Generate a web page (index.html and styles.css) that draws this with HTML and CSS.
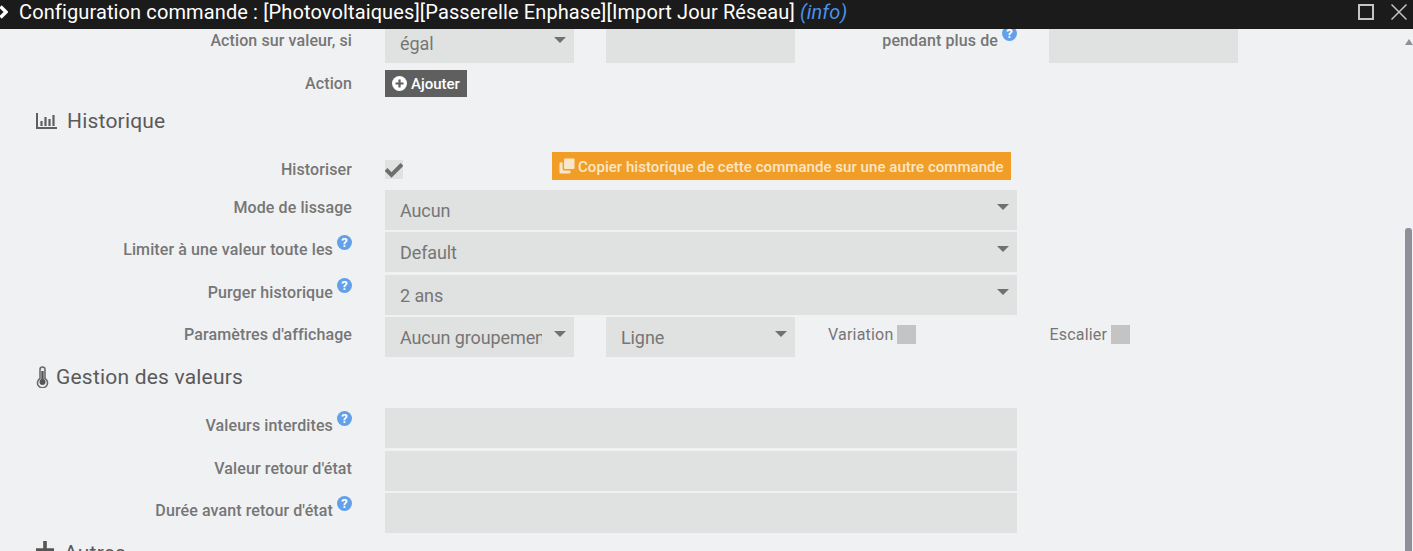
FILE: index.html
```html
<!DOCTYPE html>
<html>
<head>
<title>Configuration commande</title>
<meta name="viewport" content="width=device-width, initial-scale=1.0">
<link rel="stylesheet" href="styles.css">
</head>
<body>

<div class="modal">
  <div class="modal-title">
    <svg class="title-arrow" width="9" height="14" viewBox="0 0 9 14"><polyline points="1.5,1.5 7,7 1.5,12.5" fill="none" stroke="#fff" stroke-width="3.4"/></svg>
    <span class="title-text">Configuration commande : [Photovoltaiques][Passerelle Enphase][Import Jour Réseau] <i class="title-type">(info)</i></span>
    <svg class="title-btn" width="16" height="16" viewBox="0 0 16 16"><rect x="1" y="1" width="14" height="14" fill="none" stroke="#c4c4c4" stroke-width="2"/></svg>
    <svg class="title-btn" width="16" height="16" viewBox="0 0 16 16"><path d="M0.5 0.5 L15.5 15.5 M15.5 0.5 L0.5 15.5" fill="none" stroke="#c4c4c4" stroke-width="1.5"/></svg>
  </div>

  <div class="modal-body">
    <div class="row row-first">
      <label class="field-label">Action sur valeur, si</label>
      <div class="select-wrap small"><select class="field"><option>égal</option></select></div>
      <input class="field small gap-left" type="text">
      <label class="field-label side-label with-help">pendant plus de <span class="help">?</span></label>
      <input class="field small" type="text">
    </div>

    <div class="row row-action">
      <label class="field-label">Action</label>
      <button class="btn-add">
        <svg width="15" height="15" viewBox="0 0 15 15"><circle cx="7.5" cy="7.5" r="7.5" fill="#fff"/><path d="M7.5 3.5 V11.5 M3.5 7.5 H11.5" stroke="#5f5f5f" stroke-width="2.2"/></svg>
        Ajouter
      </button>
    </div>

    <h3 class="section section-hist">
      <svg class="section-icon" width="21" height="16" viewBox="0 0 21 16"><path d="M1 0 V15 H21" fill="none" stroke="#5f5f5f" stroke-width="2"/><path d="M5.5 8 V13 M9.5 4 V13 M13.5 6 V13 M17.5 2 V13" stroke="#5f5f5f" stroke-width="2.2"/></svg>
      Historique
    </h3>

    <div class="row row-check">
      <label class="field-label">Historiser</label>
      <span class="checkbox">
        <svg width="18" height="19" viewBox="0 0 18 19"><polyline points="1,9.5 6.5,15 17,4.5" fill="none" stroke="#6e6e6e" stroke-width="4"/></svg>
      </span>
      <button class="btn-copy">
        <svg width="16" height="16" viewBox="0 0 16 16"><path d="M5 1.5 Q5 0.5 6 0.5 H14.5 Q15.5 0.5 15.5 1.5 V10 Q15.5 11 14.5 11 H6 Q5 11 5 10 Z" fill="#fbe6c8"/><path d="M3.6 4.5 V11 Q3.6 12.4 5 12.4 H11.5 V14.5 Q11.5 15.5 10.5 15.5 H1.5 Q0.5 15.5 0.5 14.5 V5.5 Q0.5 4.5 1.5 4.5 Z" fill="#fbe6c8"/></svg>
        <span class="btn-copy-text">Copier historique de cette commande sur une autre commande</span>
      </button>
    </div>

    <div class="row">
      <label class="field-label">Mode de lissage</label>
      <div class="select-wrap wide"><select class="field"><option>Aucun</option></select></div>
    </div>
    <div class="row row-gap3">
      <label class="field-label with-help">Limiter à une valeur toute les <span class="help">?</span></label>
      <div class="select-wrap wide"><select class="field"><option>Default</option></select></div>
    </div>
    <div class="row">
      <label class="field-label with-help">Purger historique <span class="help">?</span></label>
      <div class="select-wrap wide"><select class="field"><option>2 ans</option></select></div>
    </div>
    <div class="row">
      <label class="field-label">Paramètres d'affichage</label>
      <div class="select-wrap small"><select class="field"><option>Aucun groupement</option></select></div>
      <div class="select-wrap small gap-left"><select class="field"><option>Ligne</option></select></div>
      <span class="option option-var">Variation <span class="square"></span></span>
      <span class="option option-esc">Escalier <span class="square"></span></span>
    </div>

    <h3 class="section section-val">
      <svg class="section-icon" width="13" height="22" viewBox="0 0 13 22"><path d="M4 3.5 A2.5 2.5 0 0 1 9 3.5 V12.5 A5 5 0 1 1 4 12.5 Z" fill="#f0f1f3" stroke="#6b6b6b" stroke-width="1.6"/><circle cx="6.5" cy="16" r="3" fill="#555"/><rect x="5.3" y="5" width="2.4" height="10" fill="#555"/></svg>
      Gestion des valeurs
    </h3>

    <div class="row row-gap3">
      <label class="field-label with-help">Valeurs interdites <span class="help">?</span></label>
      <input class="field wide" type="text">
    </div>
    <div class="row">
      <label class="field-label">Valeur retour d'état</label>
      <input class="field wide" type="text">
    </div>
    <div class="row">
      <label class="field-label with-help">Durée avant retour d'état <span class="help">?</span></label>
      <input class="field wide" type="text">
    </div>

    <h3 class="section section-other">
      <svg class="section-icon" width="18" height="18" viewBox="0 0 18 18"><path d="M9 0 V18 M0 9 H18" stroke="#555" stroke-width="3.6"/></svg>
      Autres
    </h3>
  </div>

  <div class="scroll-arrow"></div>
  <div class="scroll-thumb"></div>
</div>

</body>
</html>
```

FILE: styles.css
```css
/* --- page --- */
html, body {
  margin: 0;
  height: 100%;
  overflow: hidden;
}

body {
  font-family: Roboto, sans-serif;
  background-color: #f0f1f3;
  color: #767676;
}

.modal {
  position: relative;
  height: 551px;
  overflow: hidden;
}

/* --- title bar --- */
.modal-title {
  display: flex;
  align-items: center;
  box-sizing: border-box;
  height: 29px;
  padding-bottom: 5px;
  background-color: #1b1b1b;
  color: #fff;
  font-size: 20px;
  letter-spacing: 0.12px;
}

.title-arrow {
  margin-left: -1px;
  flex: none;
}

.title-text {
  margin-left: 11px;
  flex: 1;
  white-space: nowrap;
}

.title-type {
  color: #4a90e8;
}

.title-btn {
  margin-right: 17px;
  flex: none;
}

.title-btn:last-of-type {
  margin-right: 6px;
}

/* --- form rows --- */
.modal-body {
  height: 522px;
  overflow: hidden;
}

.row {
  display: flex;
  align-items: flex-start;
  height: 40px;
  margin-bottom: 2px;
}

.row-first {
  margin-top: -6px;
  margin-bottom: 7px;
}

.row-gap3 {
  margin-bottom: 3px;
}

.row-action {
  height: 27px;
  margin-bottom: 0;
}

.row-check {
  height: 28px;
  margin-bottom: 10px;
}

.field-label {
  flex: none;
  width: 352px;
  margin-right: 33px;
  padding-top: 8px;
  text-align: right;
  font-size: 16px;
  font-weight: 500;
  letter-spacing: 0.1px;
  line-height: 20px;
  white-space: nowrap;
}

.with-help {
  padding-top: 3px;
}

.field {
  display: block;
  box-sizing: border-box;
  height: 40px;
  margin: 0;
  padding: 0 15px;
  border: none;
  border-radius: 0;
  background-color: #e0e2e1;
  color: #767676;
  font-family: Roboto, sans-serif;
  font-size: 18px;
  letter-spacing: -0.1px;
  outline: none;
  appearance: none;
  -webkit-appearance: none;
}

select.field {
  width: 100%;
  padding-right: 32px;
}

.small {
  flex: none;
  width: 189px;
}

.wide {
  flex: none;
  width: 632px;
}

.gap-left {
  margin-left: 32px;
}

.select-wrap {
  position: relative;
}

.select-wrap::after {
  content: "";
  position: absolute;
  top: 14px;
  right: 8px;
  border-left: 6.5px solid transparent;
  border-right: 6.5px solid transparent;
  border-top: 6.5px solid #707070;
  pointer-events: none;
}

.side-label {
  width: 222px;
  margin-right: 32px;
}

.help {
  display: inline-block;
  width: 15px;
  height: 15px;
  border-radius: 50%;
  background-color: #62a0ea;
  color: #fff;
  font-size: 13px;
  font-weight: 700;
  letter-spacing: 0;
  line-height: 15px;
  text-align: center;
  vertical-align: 8px;
}

/* --- buttons --- */
.btn-add {
  display: flex;
  align-items: center;
  gap: 4px;
  box-sizing: border-box;
  width: 82px;
  height: 27px;
  padding: 0 0 0 7px;
  border: none;
  background-color: #5f5f5f;
  color: #fff;
  font-family: Roboto, sans-serif;
  font-size: 15px;
  font-weight: 500;
}

.row-action .field-label {
  padding-top: 4px;
}

.btn-copy {
  display: flex;
  align-items: center;
  gap: 3px;
  box-sizing: border-box;
  width: 459px;
  height: 28px;
  margin-left: 149px;
  padding: 0 0 0 7px;
  border: none;
  background-color: #f09e28;
  color: #fbe6c8;
  font-family: Roboto, sans-serif;
  font-size: 15px;
  font-weight: 500;
  letter-spacing: 0.05px;
  white-space: nowrap;
}

.btn-copy-text {
  padding-top: 2px;
}

.checkbox {
  flex: none;
  display: block;
  width: 18px;
  height: 19px;
  margin-top: 8px;
  background-color: #e0e2e1;
}

/* --- section titles --- */
.section {
  display: flex;
  align-items: center;
  margin: 0;
  padding-left: 36px;
  font-size: 21px;
  font-weight: 400;
  letter-spacing: 0.2px;
  line-height: 24px;
  color: #5a5a5a;
}

.section-hist {
  gap: 10px;
  margin-top: 12px;
  margin-bottom: 19px;
}

.section-val {
  gap: 7px;
  margin-top: 8px;
  margin-bottom: 19px;
}

.section-other {
  gap: 10px;
  margin-top: 8px;
}

.section-other .section-icon {
  align-self: flex-start;
}

/* --- display options --- */
.option {
  display: flex;
  align-items: center;
  gap: 4px;
  flex: none;
  font-size: 16px;
  letter-spacing: 0.2px;
  height: 19px;
  margin-top: 8px;
}

.option-var {
  margin-left: 33px;
}

.option-esc {
  margin-left: 133px;
}

.square {
  display: block;
  width: 19px;
  height: 19px;
  background-color: #c4c4c4;
}

/* --- scrollbar --- */
.scroll-arrow {
  position: absolute;
  top: 39px;
  right: 0;
  border-left: 4.5px solid transparent;
  border-right: 4.5px solid transparent;
  border-bottom: 6px solid #8f8f99;
}

.scroll-thumb {
  position: absolute;
  top: 228px;
  right: 1px;
  bottom: 0;
  width: 7px;
  border-radius: 3px 3px 0 0;
  background-color: #8f8f99;
}
```
